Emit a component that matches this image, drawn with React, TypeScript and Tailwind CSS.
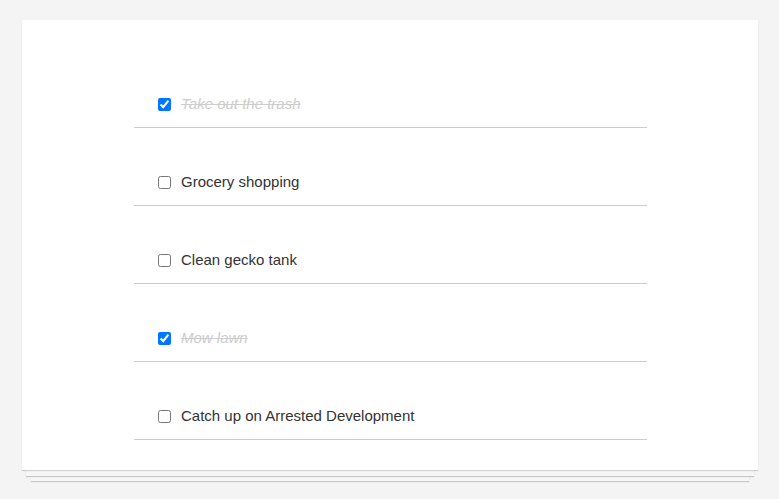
import { useState } from "react";

type Todo = { id: number; title: string; done: boolean };

const initialTodos: Todo[] = [
  { id: 1, title: "Take out the trash", done: true },
  { id: 2, title: "Grocery shopping", done: false },
  { id: 3, title: "Clean gecko tank", done: false },
  { id: 4, title: "Mow lawn", done: true },
  { id: 5, title: "Catch up on Arrested Development", done: false },
];

const App = () => {
  const [todos, setTodos] = useState(initialTodos);

  const toggle = (id: number) => {
    setTodos((list) => list.map((t) => (t.id === id ? { ...t, done: !t.done } : t)));
  };

  return (
    <div className="min-h-[499px] bg-[#f4f4f4] pl-[22px] pr-[21px] pt-[20px] font-['Liberation_Sans',Arial,sans-serif]">
      <div className="h-[450px] bg-white pt-[30px] shadow-[0_1px_1px_rgba(0,0,0,0.15),0_10px_0_-4px_#f6f6f6,0_11px_1px_-4px_rgba(0,0,0,0.18),0_20px_0_-9px_#f6f6f6,0_21px_1px_-9px_rgba(0,0,0,0.18)]">
        <ul className="ml-[112px] mr-[111px]">
          {todos.map((todo) => (
            <li
              key={todo.id}
              className="flex items-center border-b border-[#cccccc] pb-[13px] pl-[24px] pt-[44px]"
            >
              <input
                type="checkbox"
                checked={todo.done}
                onChange={() => toggle(todo.id)}
                className="m-0 h-[13px] w-[13px] accent-[#0075ff]"
              />
              <span
                className={
                  todo.done
                    ? "ml-[10px] text-[15px] leading-[20px] text-[#cdcdcd] italic line-through"
                    : "ml-[10px] text-[15px] leading-[20px] text-[#333333]"
                }
              >
                {todo.title}
              </span>
            </li>
          ))}
        </ul>
      </div>
    </div>
  );
};

export default App;
